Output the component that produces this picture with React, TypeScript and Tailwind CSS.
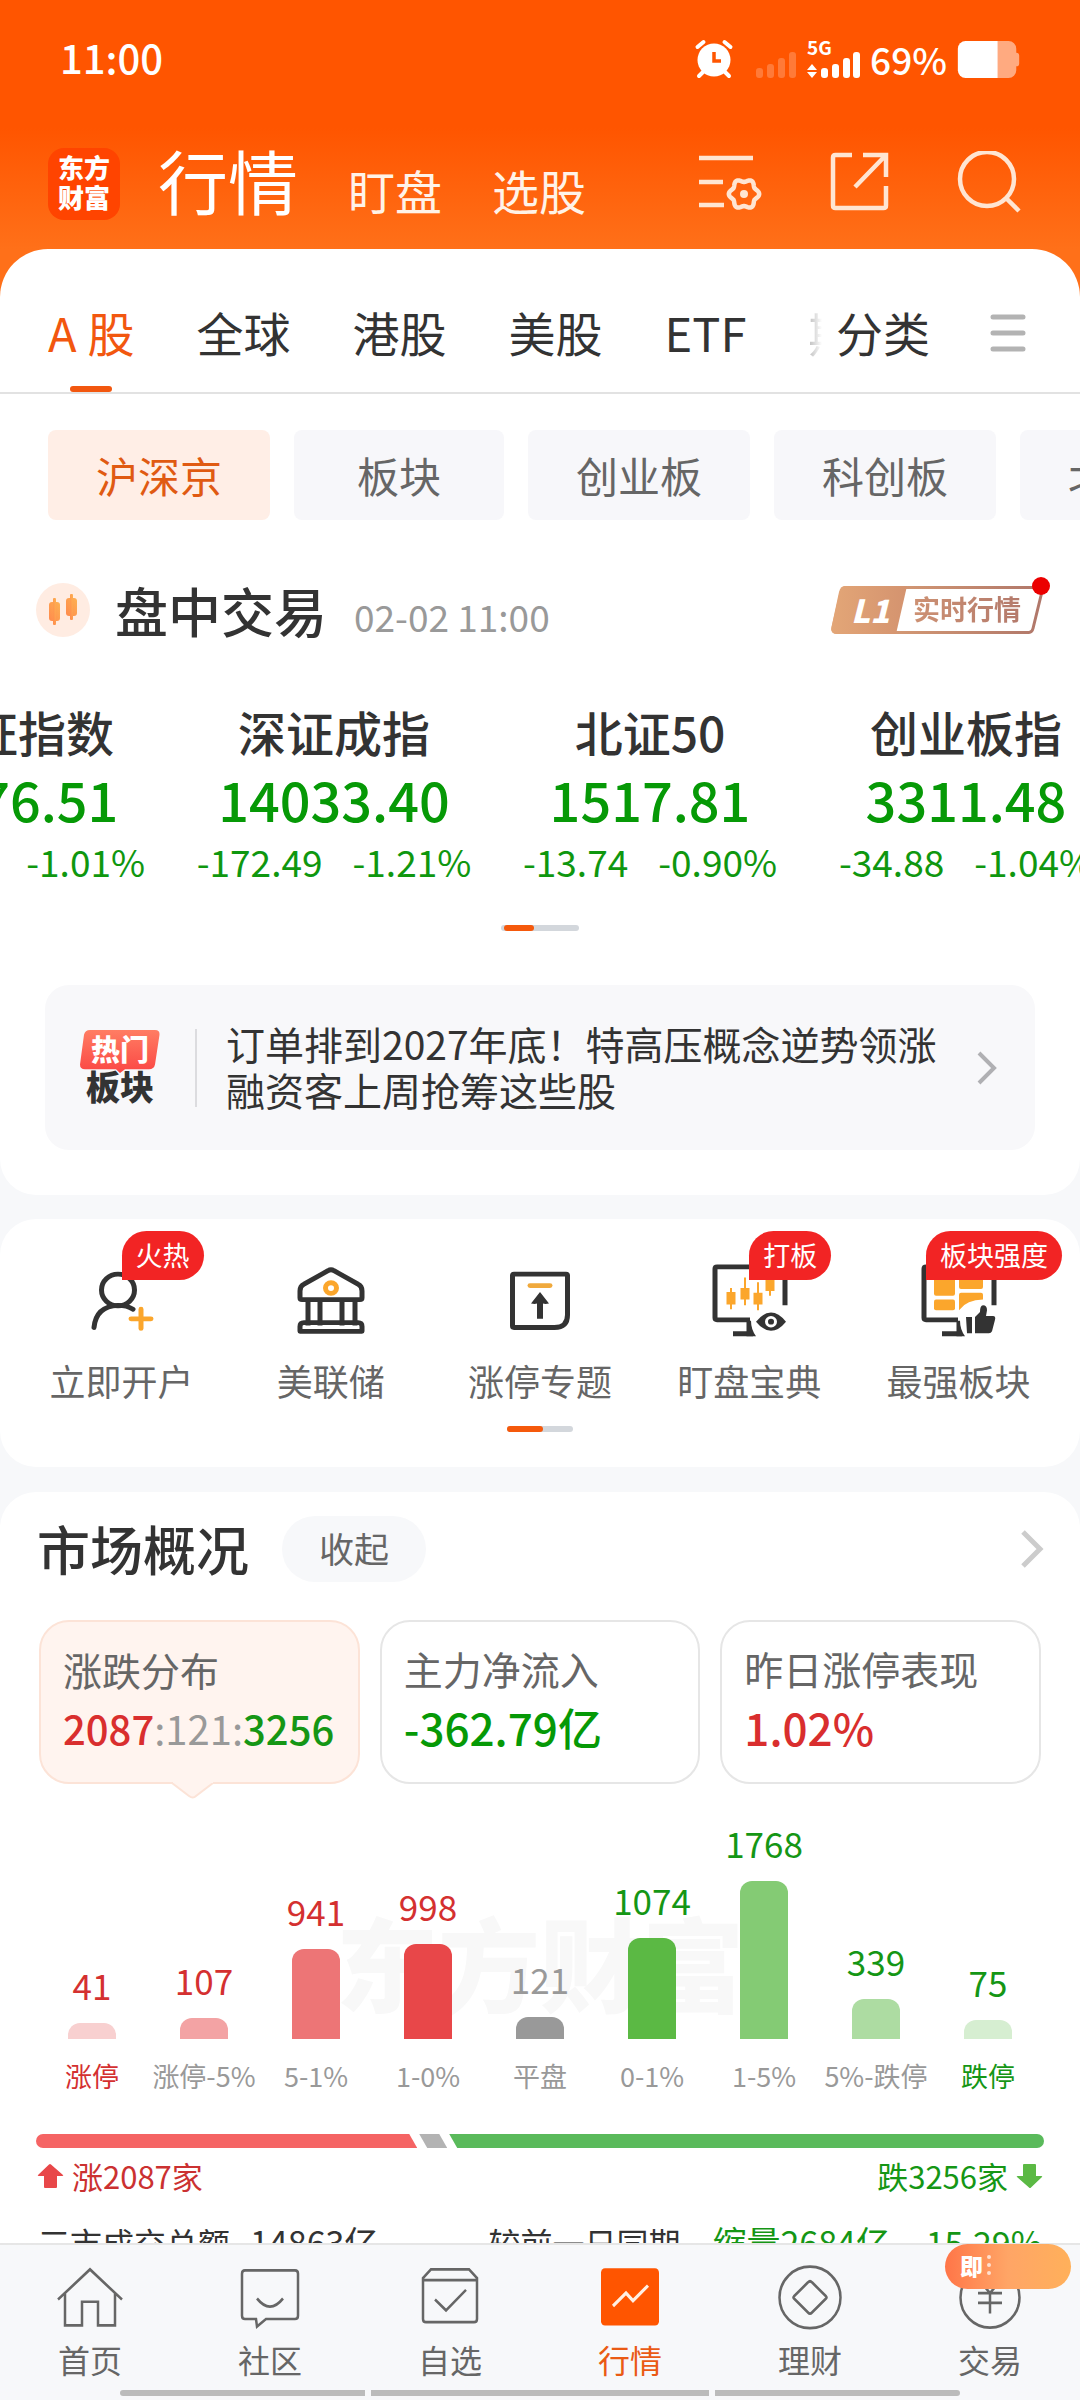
import { useState } from "react";
import type { ReactNode } from "react";
import clsx from "clsx";

const MARKETS = ["A股", "全球", "港股", "美股", "ETF"];
const BOARDS = ["沪深京", "板块", "创业板", "科创板", "北交所"];

const INDICES = [
  { name: "上证指数", value: "4076.51", change: "-41.44", percent: "-1.01%" },
  { name: "深证成指", value: "14033.40", change: "-172.49", percent: "-1.21%" },
  { name: "北证50", value: "1517.81", change: "-13.74", percent: "-0.90%" },
  { name: "创业板指", value: "3311.48", change: "-34.88", percent: "-1.04%" },
];

const BARS = [
  { label: "涨停", count: 41, height: 16, bar: "bg-[#f8d0d0]", text: "text-[#d43030]", labelText: "text-[#d43030]" },
  { label: "涨停-5%", count: 107, height: 21, bar: "bg-[#f3a3a4]", text: "text-[#d43030]", labelText: "text-[#999]" },
  { label: "5-1%", count: 941, height: 90, bar: "bg-[#ed7576]", text: "text-[#d43030]", labelText: "text-[#999]" },
  { label: "1-0%", count: 998, height: 95, bar: "bg-[#e84749]", text: "text-[#d43030]", labelText: "text-[#999]" },
  { label: "平盘", count: 121, height: 22, bar: "bg-[#999]", text: "text-[#999]", labelText: "text-[#999]" },
  { label: "0-1%", count: 1074, height: 101, bar: "bg-[#5bb944]", text: "text-[#159615]", labelText: "text-[#999]" },
  { label: "1-5%", count: 1768, height: 158, bar: "bg-[#84cb74]", text: "text-[#159615]", labelText: "text-[#999]" },
  { label: "5%-跌停", count: 339, height: 40, bar: "bg-[#addca2]", text: "text-[#159615]", labelText: "text-[#999]" },
  { label: "跌停", count: 75, height: 19, bar: "bg-[#d6eed1]", text: "text-[#159615]", labelText: "text-[#159615]" },
];

const UP = 2087;
const FLAT = 121;
const DOWN = 3256;

// six-lobed outline of the settings gear, centred on (45, 43)
const GEAR = Array.from({ length: 72 }, (_, i) => {
  const a = (i / 72) * Math.PI * 2;
  const r = 13.6 + 1.6 * Math.cos(6 * a);
  return `${(45 + r * Math.cos(a)).toFixed(2)},${(43 + r * Math.sin(a)).toFixed(2)}`;
}).join(" ");

function StatusBar() {
  return (
    <div className="flex h-[118px] items-center justify-between pr-[59px] pl-[60px]">
      <time className="pb-1 text-[40px] leading-none font-medium">11:00</time>
      <div className="flex items-center gap-[10px]">
        <svg className="h-[38px] w-[164px] overflow-visible" viewBox="0 0 164 38" fill="none">
          <circle cx="18" cy="20" r="16.500" fill="#fff" />
          <path d="M1.500 7 7.500 2M34.500 7 28.500 2M7 32l-4 4M29 32l4 4" stroke="#fff" strokeWidth="4" strokeLinecap="round" />
          <path d="M18 12v9h7" stroke="#ff5500" strokeWidth="3.500" />
          <g fill="#fff" fillOpacity=".22">
            <rect x="60" y="28" width="7" height="10" rx="3" />
            <rect x="71" y="24" width="7" height="14" rx="3" />
            <rect x="82" y="18" width="7" height="20" rx="3" />
            <rect x="93" y="12" width="7" height="26" rx="3" />
          </g>
          <text x="111" y="15" fill="#fff" fontSize="19" fontWeight="700">5G</text>
          <path d="m116 24 5 6h-10zM116 38l5-6h-10z" fill="#fff" />
          <g fill="#fff">
            <rect x="125" y="28" width="7" height="10" rx="3" />
            <rect x="136" y="24" width="7" height="14" rx="3" />
            <rect x="147" y="18" width="7" height="20" rx="3" />
            <rect x="157" y="12" width="7" height="26" rx="3" />
          </g>
        </svg>
        <span className="text-[37px] leading-none font-medium">69%</span>
        <svg className="h-[37px] w-[64px]" viewBox="0 0 64 38">
          <path d="M8 0h33v38H8a8 8 0 0 1-8-8V8a8 8 0 0 1 8-8Z" fill="#fff" />
          <path d="M41 0h11a8 8 0 0 1 8 8v4q3 0 3 3v8q0 3-3 3v4a8 8 0 0 1-8 8H41Z" fill="#fff" fillOpacity=".5" />
        </svg>
      </div>
    </div>
  );
}

function TopNav() {
  return (
    <div className="flex h-[131px] items-center pr-[59px] pl-12">
      <span className="flex h-[72px] w-[72px] shrink-0 flex-col items-center justify-center rounded-[16px] bg-[#ff4400] pb-[3px] text-[26px] leading-[30px] font-black">
        <span>东方</span>
        <span>财富</span>
      </span>
      <nav className="ml-[38px] flex items-baseline gap-[50px] pt-[3px] leading-[100px]">
        <a href="#quotes" className="text-[70px]">行情</a>
        <a href="#watch" className="text-[47px] text-[#fff3e8]">盯盘</a>
        <a href="#pick" className="text-[47px] text-[#fff3e8]">选股</a>
      </nav>
      <div className="ml-auto flex items-center gap-[66px] text-[#ffe5d2]">
        <button aria-label="设置">
          <svg className="h-[66px] w-[64px]" viewBox="0 0 64 66" fill="none" stroke="currentColor" strokeWidth="4.500">
            <path d="M0 7h54M0 31h24M0 54h25" />
            <polygon points={GEAR} strokeLinejoin="round" />
            <circle cx="45" cy="43" r="4" fill="currentColor" stroke="none" />
          </svg>
        </button>
        <button aria-label="分享">
          <svg className="h-[66px] w-[62px]" viewBox="0 0 62 66" fill="none" stroke="currentColor" strokeWidth="4.500">
            <path d="M23 4H6.500Q4 4 4 6.500v48Q4 57 6.500 57h48q2.500 0 2.500-2.500V35M34 4h23v22M57 4 26 36" />
          </svg>
        </button>
        <button aria-label="搜索">
          <svg className="h-[66px] w-[64px]" viewBox="0 0 64 66" fill="none" stroke="currentColor" strokeWidth="4.500">
            <circle cx="30" cy="28" r="27" />
            <path d="m48 46 14 14" />
          </svg>
        </button>
      </div>
    </div>
  );
}

function MarketTabs() {
  const [active, setActive] = useState("A股");
  return (
    <div className="flex h-[145px] items-stretch rounded-t-[48px] border-b-2 border-[#e2e2e2] bg-white pr-[54px] pl-12 text-[47px] text-[#333]">
      <div className="flex flex-1 gap-[62px] overflow-hidden">
        {MARKETS.map((name) => (
          <button
            key={name}
            onClick={() => setActive(name)}
            className={clsx("relative flex shrink-0 items-center pt-[24px]", active === name && "text-[#f2570f]")}
          >
            {name === "A股" ? (
              <span className="flex gap-[11px]">
                <span>A</span>
                <span>股</span>
              </span>
            ) : (
              name
            )}
            {active === name && (
              <span className="absolute bottom-0 left-1/2 h-[6px] w-[42px] -translate-x-1/2 rounded-full bg-[#f2570f]" />
            )}
          </button>
        ))}
        <button className="w-[14px] shrink-0 overflow-hidden bg-linear-to-r from-[#bbb] to-white bg-clip-text pt-[24px] text-left whitespace-nowrap text-transparent">
          期货
        </button>
      </div>
      <button className="ml-[10px] pt-[24px]">分类</button>
      <button aria-label="全部分类" className="ml-[60px] flex items-center pt-[24px]">
        <svg className="h-[38px] w-[36px]" viewBox="0 0 36 38" stroke="#b3b3b3" strokeWidth="5" strokeLinecap="round">
          <path d="M3 3h30M3 19h30M3 35h30" />
        </svg>
      </button>
    </div>
  );
}

function BoardChips() {
  const [active, setActive] = useState("沪深京");
  return (
    <div className="flex gap-6 overflow-hidden pt-9 pl-12">
      {BOARDS.map((name) => (
        <button
          key={name}
          onClick={() => setActive(name)}
          className={clsx(
            "h-[90px] min-w-[210px] shrink-0 rounded-[8px] px-12 text-[42px] leading-[84px]",
            active === name ? "bg-[#ffeee6] text-[#e05a12]" : "bg-[#f7f7fa] text-[#666]"
          )}
        >
          {name}
        </button>
      ))}
    </div>
  );
}

function LevelBadge() {
  return (
    <button className="relative flex h-[48px] w-[214px] items-center">
      <svg className="absolute inset-0 h-full w-full" viewBox="0 0 214 48" fill="none">
        <defs>
          <linearGradient id="bronze" x1="0" x2="1">
            <stop offset="0" stopColor="#e3a677" />
            <stop offset="1" stopColor="#b0776a" />
          </linearGradient>
          <linearGradient id="bronzeFill" x1="0" x2="1">
            <stop offset="0" stopColor="#e3a677" />
            <stop offset="1" stopColor="#d4936f" />
          </linearGradient>
        </defs>
        <path d="M14 1.500h194q4 0 3 4l-9 37q-1 4-4 4H6q-5 0-4-5l8-35q1-5 4-5Z" stroke="url(#bronze)" strokeWidth="3" />
        <path d="M14 0h62L65 48H6q-7 0-5.500-7L8 6q1.500-6 6-6Z" fill="url(#bronzeFill)" />
      </svg>
      <span className="relative ml-[20px] w-[46px] pb-[3px] text-left text-[32px] leading-none font-black text-white italic">L1</span>
      <span className="relative ml-[16px] bg-linear-to-r from-[#cd9173] to-[#b47a6c] bg-clip-text pb-[3px] text-[27px] leading-[40px] font-bold text-transparent">
        实时行情
      </span>
      <span className="absolute -top-[9px] -right-[5px] h-[18px] w-[18px] rounded-full bg-[#eb0000]" />
    </button>
  );
}

function Pager({ className, thumb }: { className: string; thumb: string }) {
  return (
    <div className={clsx("mx-auto h-[6px] rounded-full bg-[#d3d7dc]", className)}>
      <div className={clsx("h-full rounded-full bg-[#f5590c]", thumb)} />
    </div>
  );
}

function Overview() {
  return (
    <section className="rounded-b-[36px] bg-white pb-[45px]">
      <BoardChips />

      <div className="mt-[63px] flex h-[54px] items-center pr-[35px] pl-9">
        <svg className="h-[54px] w-[54px]" viewBox="0 0 54 54">
          <defs>
            <linearGradient id="candle" x1="0" y1="1" x2="1" y2="0">
              <stop offset="0" stopColor="#ff8a4d" />
              <stop offset="1" stopColor="#fdb152" />
            </linearGradient>
          </defs>
          <circle cx="27" cy="27" r="27" fill="#ffece2" />
          <g fill="url(#candle)">
            <rect x="13" y="19" width="11" height="19" rx="3" />
            <rect x="17" y="15" width="3" height="27" rx="1" />
            <rect x="30" y="15" width="11" height="18" rx="3" />
            <rect x="34" y="11" width="3" height="26" rx="1" />
          </g>
        </svg>
        <h2 className="ml-[25px] text-[53px] leading-[54px] font-medium text-[#333]">盘中交易</h2>
        <time className="mt-3 ml-[27px] text-[37px] leading-[42px] text-[#999]">02-02 11:00</time>
        <div className="ml-auto">
          <LevelBadge />
        </div>
      </div>

      <div className="mt-[63px] flex overflow-hidden">
        <ul className="-ml-[140px] flex shrink-0">
          {INDICES.map((item) => (
            <li key={item.name} className="w-[316px] shrink-0 text-center text-[#0f970f]">
              <h3 className="text-[48px] leading-[62px] font-medium text-[#333]">{item.name}</h3>
              <p className="text-[54px] leading-[74px] font-medium text-[#069906]">{item.value}</p>
              <p className="flex justify-center gap-[30px] text-[37px] leading-[50px]">
                <span>{item.change}</span>
                <span>{item.percent}</span>
              </p>
            </li>
          ))}
        </ul>
      </div>
      <Pager className="mt-[39px] w-[78px] pl-[3px]" thumb="w-[30px]" />

      <a href="#hot" className="mx-[45px] mt-[54px] flex h-[165px] items-center rounded-[24px] bg-[#f8f8fa] pr-[38px] pl-[35px]">
        <span className="relative flex w-[80px] flex-col items-center">
          <svg className="absolute inset-x-0 top-0 h-[44px] w-[80px]" viewBox="0 0 80 46" preserveAspectRatio="none">
            <defs>
              <linearGradient id="hot" x1="0" y1="0" x2="0" y2="1">
                <stop offset="0" stopColor="#ff7d63" />
                <stop offset="1" stopColor="#fb4744" />
              </linearGradient>
            </defs>
            <path d="M10 0h65q5 0 4.500 5L75 36q-1 5-6 5H45l-5 4-4-4H5q-5 0-5-5L4 5q1-5 6-5Z" fill="url(#hot)" />
          </svg>
          <span className="relative text-[29px] leading-[37px] font-black text-white">热门</span>
          <span className="text-[34px] leading-[38px] font-black text-[#333]">板块</span>
        </span>
        <span className="ml-[35px] h-[78px] w-[2px] bg-[#dcdcdf]" />
        <span className="ml-[29px] flex-1 pb-1 text-[39px] leading-[46px] text-[#333]">
          订单排到2027年底！特高压概念逆势领涨
          <br />
          融资客上周抢筹这些股
        </span>
        <svg className="h-[34px] w-[20px]" viewBox="0 0 20 34" fill="none" stroke="#b0b0b3" strokeWidth="4">
          <path d="m2 2 15 15L2 32" />
        </svg>
      </a>
    </section>
  );
}

function Shortcut({ label, badge, badgeAt = "left-1/2", children }: { label: string; badge?: string; badgeAt?: string; children: ReactNode }) {
  return (
    <a href="#shortcut" className="relative flex flex-1 flex-col items-center">
      <svg className="h-[77px] w-[80px]" viewBox="0 0 80 80" preserveAspectRatio="none" fill="none" stroke="#333" strokeWidth="5">
        {children}
      </svg>
      <span className="mt-[15px] text-[36px] leading-[50px] text-[#666]">{label}</span>
      {badge && (
        <span
          className={clsx(
            "absolute -top-[32px] h-[49px] rounded-[25px] rounded-bl-none bg-[#f22424] px-[14px] text-[27px] leading-[47px] whitespace-nowrap text-white",
            badgeAt
          )}
        >
          {badge}
        </span>
      )}
    </a>
  );
}

function Shortcuts() {
  return (
    <section className="mt-6 rounded-[36px] bg-white px-[17px] pt-[44px] pb-[35px]">
      <div className="flex">
        <Shortcut label="立即开户" badge="火热">
          <g strokeLinecap="round">
            <circle cx="36" cy="28" r="16.500" />
            <path d="M12 67q2-22 24-23 9 0 15 4" />
            <path d="M59 48v20M49 58h20" stroke="#fba62c" />
          </g>
        </Shortcut>
        <Shortcut label="美联储">
          <path d="M9 29q0-5 4-7L37 8q3-2 6 0l24 14q4 2 4 7v7q0 2-2 2H11q-2 0-2-2ZM17 38v27M29 38v27M51 38v27M64 38v27M9 71V66q0-4 4-4h54q4 0 4 4v5Z" strokeLinejoin="round" />
          <circle cx="40" cy="26" r="5.500" stroke="#fba62c" />
        </Shortcut>
        <Shortcut label="涨停专题">
          <path d="M14 11.500h52q1.500 0 1.500 1.500v41q0 13-13 13H14q-1.500 0-1.500-1.500V13q0-1.500 1.500-1.500Z" />
          <path d="M30 23.500h20" stroke="#f0a93c" strokeLinecap="round" />
          <path d="M40 30 49 42q-4 1-6 0v16h-6V42q-2 1-6 0Z" fill="#333" stroke="none" />
        </Shortcut>
        <Shortcut label="盯盘宝典" badge="打板">
          <path d="M41 59H8q-2 0-2-2V6q0-2 2-2h66q2 0 2 2v38M24 73.500h20" />
          <path d="M37.500 60H42q0 9 5 16h-9.500Z" fill="#333" stroke="none" />
          <path d="M22 26v22M36 15v29M49 20v29M61 15v19" stroke="#fba62c" strokeWidth="2" />
          <path d="M17.500 30h9v13h-9zM31.500 26h9v12h-9zM44.500 31h9v12h-9zM56.500 16h9v13h-9z" fill="#fba62c" stroke="none" />
          <path d="M47 61q15-19 30 0-15 19-30 0Z" fill="#333" stroke="none" />
          <circle cx="62" cy="61" r="4.500" stroke="#fff" strokeWidth="3" />
        </Shortcut>
        <Shortcut label="最强板块" badge="板块强度" badgeAt="right-[1px]">
          <path d="M40 59H8q-2 0-2-2V6q0-2 2-2h66q2 0 2 2v38M24 73.500h20" />
          <path d="M38.500 60H42q0 9 5 16h-8.500Z" fill="#333" stroke="none" />
          <g fill="#fba62c" stroke="none">
            <rect x="16" y="12" width="21" height="22" rx="2" />
            <rect x="41" y="12" width="24" height="15" rx="2" />
            <rect x="16" y="38" width="21" height="11" rx="2" />
            <path d="M41 33q0-2 2-2h20q2 0 2 2v5q-16 0-24 11Z" />
          </g>
          <path d="M48 56h6v17h-5zM57 73V56l5-5q0-7 3-7 4 0 4 5l-1 6h7q3 0 2 4l-3 12q-1 2-3 2Z" fill="#333" stroke="none" />
        </Shortcut>
      </div>
      <Pager className="mt-[21px] w-[66px]" thumb="w-[36px]" />
    </section>
  );
}

function StatCard({ label, active, children }: { label: string; active?: boolean; children: ReactNode }) {
  return (
    <button
      className={clsx(
        "relative h-[164px] flex-1 rounded-[30px] border-2 pt-3 pl-[22px] text-left",
        active ? "border-[#fce3d7] bg-[#fff4ef]" : "border-[#e6e6e6] bg-white"
      )}
    >
      <span className="block text-[39px] leading-[50px] text-[#666]">{label}</span>
      <span className="block leading-[68px] font-medium whitespace-nowrap">{children}</span>
      {active && (
        <svg className="absolute top-[159px] left-[130px] h-[18px] w-[44px]" viewBox="0 0 44 18" fill="#fff4ef" stroke="#fce3d7" strokeWidth="2">
          <path d="M1 2 18 15q4 3 7 0L42 2" />
          <path d="M2 0h40v2H2z" stroke="none" />
        </svg>
      )}
    </button>
  );
}

function Distribution() {
  return (
    <div className="relative px-9">
      <span aria-hidden="true" className="absolute top-[112px] left-1/2 -translate-x-1/2 text-[102px] leading-[130px] font-black whitespace-nowrap text-[#f8f8f8]">
        东方财富
      </span>
      <div className="relative grid h-[255px] grid-cols-9 items-end">
        {BARS.map((b) => (
          <div key={b.label} className="flex flex-col items-center">
            <span className={clsx("mb-[18px] text-[35px] leading-[40px]", b.text)}>{b.count}</span>
            <span className={clsx("w-[48px] rounded-t-[12px]", b.bar)} style={{ height: b.height }} />
          </div>
        ))}
      </div>
      <div className="relative mt-[17px] grid grid-cols-9">
        {BARS.map((b) => (
          <span key={b.label} className={clsx("text-center text-[27px] leading-[40px] whitespace-nowrap", b.labelText)}>
            {b.label}
          </span>
        ))}
      </div>
    </div>
  );
}

function MarketSummary() {
  return (
    <section className="mt-[25px] rounded-t-[36px] bg-white pt-6 pb-12">
      <div className="flex h-[66px] items-center pr-9 pl-[37px]">
        <h2 className="pb-[2px] text-[53px] leading-[64px] font-medium text-[#333]">市场概况</h2>
        <button className="ml-[33px] h-[66px] w-[144px] rounded-full bg-[#f7f8fa] pb-[2px] text-[35px] text-[#666]">收起</button>
        <button aria-label="更多" className="ml-auto">
          <svg className="h-[38px] w-[24px]" viewBox="0 0 24 38" fill="none" stroke="#ccc" strokeWidth="5">
            <path d="m3 2 17 17L3 36" />
          </svg>
        </button>
      </div>

      <div className="mx-[39px] mt-[38px] flex gap-5">
        <StatCard label="涨跌分布" active>
          <span className="text-[40px] text-[#d92e2e]">{UP}</span>
          <span className="text-[40px] font-normal text-[#999]">:{FLAT}:</span>
          <span className="text-[40px] text-[#159615]">{DOWN}</span>
        </StatCard>
        <StatCard label="主力净流入">
          <span className="text-[44px] text-[#069906]">-362.79亿</span>
        </StatCard>
        <StatCard label="昨日涨停表现">
          <span className="text-[44px] text-[#d92e2e]">1.02%</span>
        </StatCard>
      </div>

      <Distribution />

      <div className="mx-9 mt-[38px] flex h-[14px]">
        <div className="rounded-l-full bg-[#f56464] [clip-path:polygon(0_0,calc(100%-8px)_0,100%_100%,0_100%)]" style={{ flexGrow: UP }} />
        <div className="mx-[2px] min-w-[28px] bg-[#b3b3b3] [clip-path:polygon(0_0,calc(100%-8px)_0,100%_100%,8px_100%)]" />
        <div className="rounded-r-full bg-[#5aba5b] [clip-path:polygon(0_0,100%_0,100%_100%,8px_100%)]" style={{ flexGrow: DOWN }} />
      </div>
      <div className="mx-9 mt-[8px] flex justify-between text-[31px] leading-[40px]">
        <span className="flex items-center gap-[8px] text-[#cb3131]">
          <svg className="h-[26px] w-[28px]" viewBox="0 0 28 26" fill="#e84749">
            <path d="M15 1.500 27 12q1 1-1 1h-5v11q0 1-1 1H9q-1 0-1-1V13H3q-2 0-1-1L13 1.500q1-1 2 0Z" />
          </svg>
          涨{UP}家
        </span>
        <span className="flex items-center gap-[8px] text-[#159615]">
          跌{DOWN}家
          <svg className="h-[26px] w-[28px]" viewBox="0 0 28 26" fill="#5bb944">
            <path d="M13 24.500 1 14q-1-1 1-1h5V2q0-1 1-1h11q1 0 1 1v11h5q2 0 1 1L15 24.500q-1 1-2 0Z" />
          </svg>
        </span>
      </div>

      <div className="mt-[24px] flex items-baseline pr-[38px] pl-[38px] text-[32px] leading-[44px] text-[#333]">
        <span>三市成交总额</span>
        <span className="ml-[20px] text-[34px]">14863亿</span>
        <span className="mr-[32px] ml-auto">较前一日同期</span>
        <span className="text-[34px] text-[#159615]">缩量2684亿</span>
        <span className="ml-[24px] text-[34px] text-[#159615]">-15.29%</span>
      </div>
    </section>
  );
}

function TabItem({ label, active, children }: { label: string; active?: boolean; children: ReactNode }) {
  return (
    <a href="#tab" className={clsx("relative flex flex-1 flex-col items-center", active ? "text-[#ea5a14]" : "text-[#666]")}>
      <svg className="h-[69px] w-[72px]" viewBox="0 0 72 64" preserveAspectRatio="none" fill="none" stroke="currentColor" strokeWidth="2.500">
        {children}
      </svg>
      <span className="mt-1 text-[32px] leading-[44px]">{label}</span>
    </a>
  );
}

function BottomNav() {
  return (
    <nav className="shrink-0 border-t-2 border-[#e6e6e6] bg-[#f7f8fa] pt-[19px]">
      <div className="flex">
        <TabItem label="首页">
          <path d="M4 33 36 5l32 28M11 27v30h17V35h16v22h17V27" />
        </TabItem>
        <TabItem label="社区">
          <path d="M11 6h50q3 0 3 3v39q0 3-3 3H32l-9 7-1-7H11q-3 0-3-3V9q0-3 3-3Z" />
          <path d="M23 32q13 15 26 0" />
        </TabItem>
        <TabItem label="自选">
          <path d="M17 5h38l8 8v38q0 3-3 3H12q-3 0-3-3V13ZM9 15h54M21 33l11 10 20-19" />
        </TabItem>
        <TabItem label="行情" active>
          <rect x="7" y="4" width="58" height="53" rx="4" fill="#ff5500" stroke="none" />
          <path d="m19 39 13-12 7 7 15-14" stroke="#fff0e4" strokeWidth="3" />
        </TabItem>
        <TabItem label="理财">
          <ellipse cx="36" cy="31" rx="30.500" ry="28.500" />
          <path d="M34 17q2-2 4 0l14 13q1 1 0 2L38 45q-2 2-4 0L20 32q-1-1 0-2Z" />
        </TabItem>
        <TabItem label="交易">
          <ellipse cx="36" cy="31" rx="29.500" ry="28" />
          <path d="m27 17 9 10 9-10M24 27h24M24 36h24M36 27v19" />
        </TabItem>
      </div>
      {/* home gesture strip */}
      <div className="mx-[120px] mt-[9px] mb-1 flex h-[6px] gap-[6px]">
        <span className="flex-[245] rounded-l-full bg-[#bbb]" />
        <span className="flex-[338] bg-[#bbb]" />
        <span className="flex-[245] rounded-r-full bg-[#bbb]" />
      </div>
    </nav>
  );
}

export default function App() {
  return (
    <div className="flex h-screen flex-col bg-[#f7f8fa] font-['Noto_Sans_CJK_SC',sans-serif]">
      <header className="shrink-0 bg-[linear-gradient(#ff5500_0,#ff5500_128px,#ff7019_249px,#ff7019_100%)] text-white">
        <StatusBar />
        <TopNav />
        <MarketTabs />
      </header>
      <main className="min-h-0 flex-1 overflow-y-auto [scrollbar-width:none]">
        <Overview />
        <Shortcuts />
        <MarketSummary />
      </main>
      <div className="relative shrink-0">
        <BottomNav />
        <span className="absolute top-px right-[9px] flex h-[45px] w-[126px] items-center overflow-hidden rounded-full bg-linear-to-r from-[#ff7548] via-[#ffa566] to-[#ffb05a] pb-[3px] pl-[15px] text-[23px] leading-none font-black text-white">
          即
          <span className="ml-[3px] h-[20px] w-[5px] border-r-4 border-dotted border-white/70" />
        </span>
      </div>
    </div>
  );
}
